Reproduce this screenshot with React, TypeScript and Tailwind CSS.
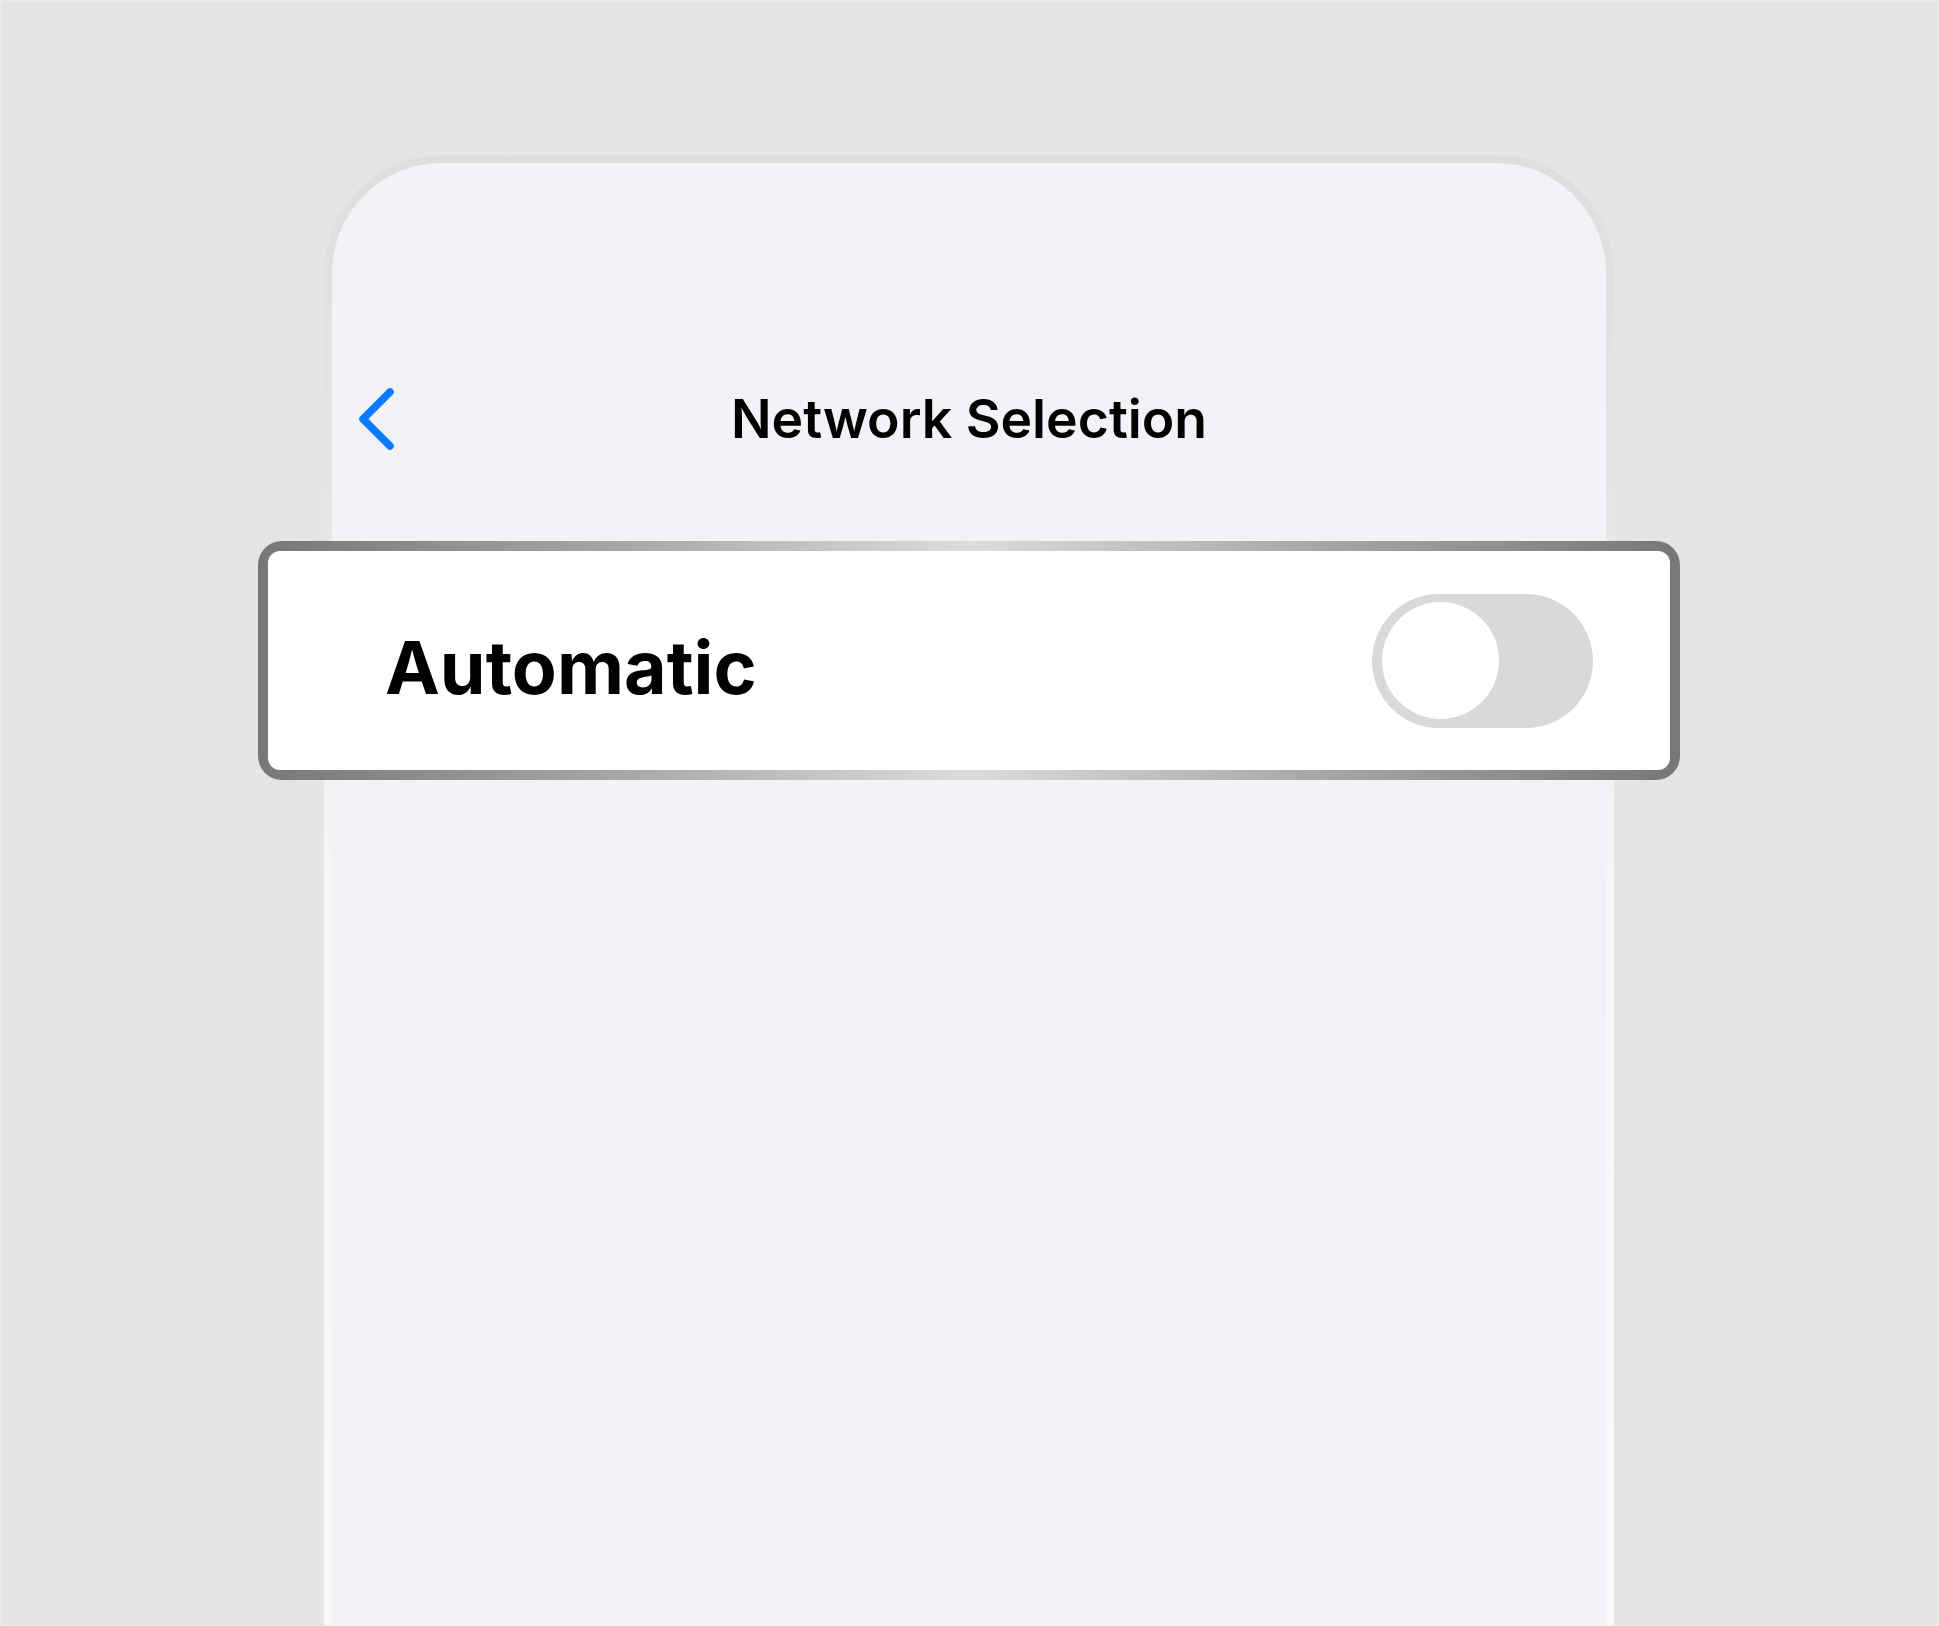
import React, { useState } from "react";

function BackChevron() {
  return (
    <svg width="44" height="68" viewBox="0 0 44 68" fill="none" aria-hidden="true">
      <path
        d="M36 7 L9 34 L36 61"
        stroke="#0a7aff"
        strokeWidth="7.5"
        strokeLinecap="round"
        strokeLinejoin="round"
      />
    </svg>
  );
}

function Toggle({ on, onChange }: { on: boolean; onChange: (v: boolean) => void }) {
  return (
    <button
      type="button"
      onClick={() => onChange(!on)}
      className={`flex h-[134px] w-[221px] shrink-0 items-center rounded-full px-[10px] ${
        on ? "justify-end bg-[#34c759]" : "justify-start bg-[#d9d9d9]"
      }`}
    >
      <span className="block h-[117px] w-[117px] rounded-full bg-white" />
    </button>
  );
}

export default function App() {
  const [automatic, setAutomatic] = useState(false);

  return (
    <div
      className="flex h-[1626px] w-[1939px] flex-col overflow-hidden border border-[#ececec] bg-[#e5e5e5] pl-[323px] pt-[154px]"
      style={{ fontFamily: "Inter, 'Noto Sans', sans-serif" }}
    >
      {/* device frame */}
      <div className="flex w-[1290px] flex-1 flex-col rounded-t-[118px] bg-[linear-gradient(to_bottom,#dedede_0%,#e6e6e6_25%,#f7f7f7_50%,#fafafa_100%)] px-[8px] pt-[8px]">
        <div className="flex flex-1 flex-col rounded-t-[110px] bg-[#f2f2f7]">
          {/* navigation bar */}
          <div className="mt-[206px] grid h-[100px] grid-cols-[1fr_auto_1fr] items-center">
            <div className="flex items-center pl-[22px]">
              <BackChevron />
            </div>
            <h1 className="text-[53.5px] font-semibold leading-none tracking-[0px] text-black">
              Network Selection
            </h1>
            <div />
          </div>

          {/* settings row */}
          <div className="-mx-[74px] mt-[72px] rounded-[24px] bg-[linear-gradient(to_right,#777777_0%,#a6a6a6_25%,#dcdcdc_50%,#a6a6a6_75%,#777777_100%)] p-[10px]">
            <div className="flex h-[219px] items-center justify-between rounded-[12px] bg-white pl-[117px] pr-[77px]">
              <span className="pt-[14px] text-[73.5px] font-bold leading-none text-black">
                Automatic
              </span>
              <Toggle on={automatic} onChange={setAutomatic} />
            </div>
          </div>
        </div>
      </div>
    </div>
  );
}
